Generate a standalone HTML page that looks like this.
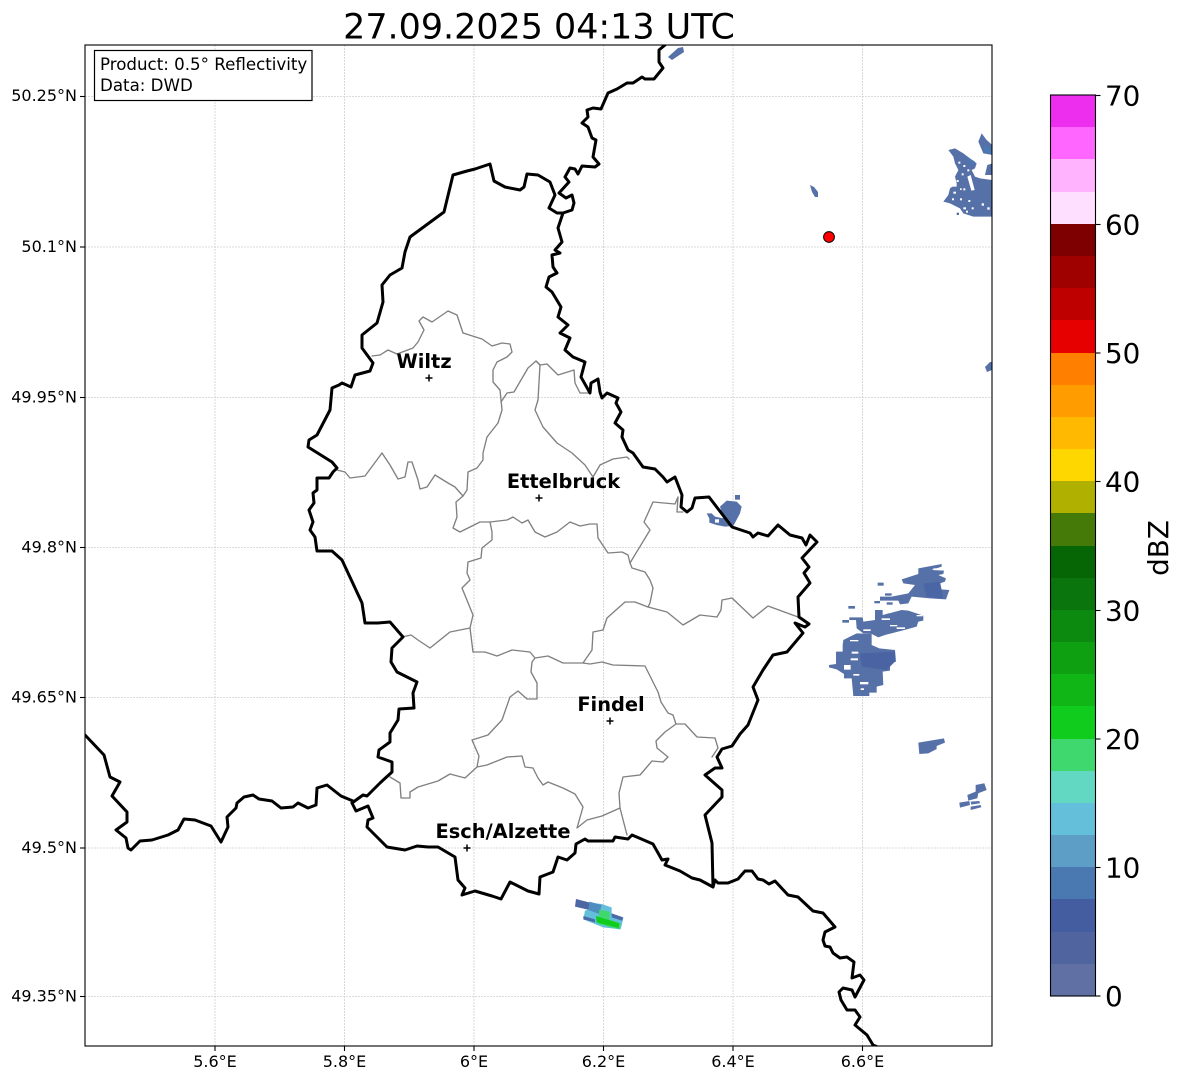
<!DOCTYPE html>
<html><head><meta charset="utf-8"><style>
html,body{margin:0;padding:0;background:#fff}
svg{display:block}
text{font-family:"DejaVu Sans","Liberation Sans",sans-serif;fill:#000}
.g line{stroke:#cfcfcf;stroke-width:.8;stroke-dasharray:2 1}
.t line{stroke:#000;stroke-width:1.1}
.b{fill:none;stroke:#000;stroke-width:3;stroke-linejoin:round;stroke-linecap:round}
.a{fill:none;stroke:#808080;stroke-width:1.35;stroke-linejoin:round;stroke-linecap:round}
.r{fill:#5670a8}
.w{fill:#fff}
.xl{font-size:16px;text-anchor:middle}
.yl{font-size:16px;text-anchor:end}
.cl{font-size:27.8px}
.cy{font-size:19.4px;font-weight:bold;text-anchor:middle}
</style></head><body>
<svg width="1184" height="1081" viewBox="0 0 1184 1081" xmlns="http://www.w3.org/2000/svg">
<defs><clipPath id="c"><rect x="85" y="45" width="907" height="1001"/></clipPath></defs>
<text x="539" y="38.500" font-size="34.900" text-anchor="middle">27.09.2025 04:13 UTC</text>
<g class="g">
<line x1="215" y1="45" x2="215" y2="1046"/><line x1="344.5" y1="45" x2="344.5" y2="1046"/><line x1="474" y1="45" x2="474" y2="1046"/><line x1="603.5" y1="45" x2="603.5" y2="1046"/><line x1="733" y1="45" x2="733" y2="1046"/><line x1="862.5" y1="45" x2="862.5" y2="1046"/>
<line x1="85" y1="96.5" x2="992" y2="96.5"/><line x1="85" y1="247" x2="992" y2="247"/><line x1="85" y1="397.5" x2="992" y2="397.5"/><line x1="85" y1="547.5" x2="992" y2="547.5"/><line x1="85" y1="697.5" x2="992" y2="697.5"/><line x1="85" y1="848" x2="992" y2="848"/><line x1="85" y1="996.5" x2="992" y2="996.5"/>
</g>
<g clip-path="url(#c)">
<!-- radar -->
<polygon class="r" points="668,57 678,48 683,47 684,52 672,60"/>
<polygon class="r" points="810,185 814,187 818,192 818,197 815,197 812,192"/>
<polygon class="r" points="985,367 990,362 992,362 992,370 987,372"/>
<g transform="translate(930,120) scale(.3333)">
<polygon class="r" points="55,90 75,85 100,100 120,115 140,130 135,145 125,150 135,170 150,175 187,180 187,290 130,290 100,280 90,265 60,250 40,245 55,225 60,205 80,190 75,170 85,150 75,130 70,110"/>
<polygon class="r" points="155,40 170,60 187,75 187,105 160,100 145,65"/>
<polygon class="r" points="172,135 187,130 187,165 165,165"/>
<polygon fill="#4a78b5" points="160,75 187,85 187,105 165,98"/>
<polygon fill="#4a78b5" points="110,110 135,125 125,140"/>
<polygon class="w" points="112,170 122,165 134,210 124,212"/>
<g class="w"><rect x="85" y="125" width="6" height="6"/><rect x="100" y="135" width="6" height="6"/><rect x="80" y="180" width="6" height="6"/><rect x="95" y="160" width="6" height="6"/><rect x="70" y="215" width="8" height="6"/><rect x="90" y="235" width="6" height="6"/><rect x="115" y="240" width="6" height="6"/><rect x="155" y="250" width="7" height="7"/><rect x="172" y="262" width="7" height="7"/><rect x="125" y="262" width="6" height="6"/><rect x="100" y="262" width="8" height="6"/><rect x="66" y="235" width="6" height="6"/><rect x="60" y="190" width="20" height="10"/><rect x="108" y="272" width="6" height="6"/><rect x="100" y="205" width="6" height="6"/><rect x="78" y="148" width="6" height="6"/><rect x="112" y="148" width="6" height="6"/><rect x="90" y="205" width="5" height="5"/></g>
<g class="r"><rect x="80" y="278" width="7" height="7"/><rect x="60" y="240" width="7" height="7"/></g>
</g>
<g transform="translate(820,550) scale(.3333)">
<polygon class="r" points="295,55 365,42 365,50 335,60 372,62 370,72 355,75 378,85 375,95 360,100 362,118 388,120 378,148 330,145 275,140 265,160 240,163 235,152 180,152 180,140 215,140 265,130 285,105 250,100 245,88 295,72"/>
<polygon fill="#4a66a5" points="310,100 360,95 370,145 320,140"/>
<g class="r"><rect x="173" y="98" width="18" height="9"/><rect x="163" y="153" width="17" height="7"/><rect x="200" y="157" width="18" height="7"/><rect x="195" y="130" width="20" height="7"/><rect x="85" y="168" width="20" height="8"/><rect x="67" y="210" width="20" height="8"/></g>
<polygon class="r" points="165,180 188,180 188,195 245,180 265,182 310,197 310,212 295,215 290,230 260,238 195,255 175,262 155,252 130,250 110,235 108,210 88,210 88,202 128,202 130,215 165,210"/>
<polygon class="r" points="70,270 110,250 155,252 155,285 178,295 225,300 228,335 210,340 210,362 188,365 190,405 170,410 170,428 148,428 148,438 100,438 95,385 72,385 72,372 50,358 27,352 27,345 48,342 48,305 68,305 68,285"/>
<polygon fill="#4a64a3" points="120,310 225,305 225,335 200,360 125,350"/>
<g class="w"><rect x="130" y="238" width="22" height="5"/><rect x="230" y="232" width="25" height="5"/><rect x="185" y="205" width="25" height="5"/><rect x="210" y="225" width="22" height="4"/><rect x="90" y="270" width="25" height="4"/><rect x="95" y="305" width="20" height="6"/><rect x="92" y="325" width="22" height="6"/><rect x="72" y="345" width="20" height="14"/><rect x="100" y="372" width="18" height="5"/><rect x="120" y="396" width="25" height="7"/><rect x="122" y="415" width="10" height="5"/><rect x="340" y="55" width="30" height="5"/><rect x="290" y="195" width="18" height="4"/></g>
<polygon class="r" points="295,578 372,565 375,578 350,588 350,597 325,610 298,612"/>
<polygon class="r" points="467,705 493,700 500,720 475,730 472,745 445,752 442,735 467,725"/>
<polygon class="r" points="418,758 448,753 450,765 420,773"/>
<polygon class="r" points="452,755 478,753 480,760 454,764"/>
<polygon class="r" points="452,770 482,765 484,772 452,780"/>
</g>
<g transform="translate(560,370) scale(.3333)">
<polygon class="r" points="480,410 500,392 530,395 545,410 540,430 520,468 495,470 470,465 448,458 448,445 440,430 455,430 465,440 490,445"/>
<rect class="r" x="525" y="375" width="15" height="14"/>
<rect class="w" x="465" y="448" width="12" height="10"/>
</g>
<g transform="translate(560,890) scale(.3333)">
<polygon fill="#4f66a5" points="48,27 90,38 88,60 45,50"/>
<polygon fill="#64c0da" points="90,38 125,42 155,52 155,70 190,85 182,118 130,112 70,88 75,62 88,58"/>
<polygon fill="#4f8cc0" points="88,35 125,45 118,72 85,60"/>
<polygon fill="#4a6aa8" points="70,78 105,88 105,97 70,88"/>
<polygon fill="#4a6aa8" points="155,70 190,82 186,92 155,82"/>
<polygon fill="#3fd86e" points="118,58 150,66 148,88 182,100 178,118 115,102"/>
<polygon fill="#10cc1c" points="108,78 178,100 176,114 110,97"/>
</g>
<!-- admin lines -->
<g class="a">
<path d="M372,356 380,355 388,350 397,354 413,348 418,342 424,330 419,321 423,317 432,322 448,311 457,315 463,333 482,339 492,346 502,343 510,344 512,352 507,357 497,362 493,370 493,382 500,390 502,410 498,423 487,437 483,453 483,460 477,468 468,472 467,490 463,496 456,502 457,517 453,528 460,532 480,522 490,522 507,520 513,517 522,523 528,520 535,532 545,537 557,532 570,522 580,526 590,524 597,524 598,538 608,553 622,552 628,555 630,563 650,530 644,522 653,502 675,504 678,497 677,512 683,512"/>
<path d="M337,470 345,472 350,478 365,476 382,453 390,465 398,479 405,477 408,462 412,462 418,480 420,489 427,487 435,475 448,483 455,487 463,496"/>
<path d="M490,522 492,532 492,540 482,548 481,558 468,562 467,573 470,580 462,588 473,615 470,628 450,632 430,648 418,640 411,635 402,637"/>
<path d="M470,628 473,652 485,652 497,656 512,650 530,652 535,658 548,656 563,663 583,663 590,664 602,662 613,665 645,666 658,692 661,702 668,713 673,715 676,724 685,724 697,737 715,738 718,748 712,757"/>
<path d="M676,724 665,732 656,741 657,748 668,757 663,762 652,761 640,775 623,777 619,793 620,808 627,835"/>
<path d="M620,808 602,816 587,820 577,828 583,807 575,794 563,788 548,782 543,785 538,778 533,768 525,767 522,756 507,757 487,765 477,767 465,778 450,774 438,781 418,787 410,792 410,798 401,798 400,783 390,777"/>
<path d="M477,767 479,756 472,740 488,735 502,720 510,697 518,691 527,699 537,699 537,683 531,672 532,662 535,658"/>
<path d="M501,402 507,393 514,392 528,368 536,361 540,365 538,400 535,410 543,427 557,443 572,453 585,465 593,477 600,465 613,459 627,457 629,459"/>
<path d="M536,361 540,365 547,364 553,370 558,375 574,370 575,383 580,393 588,393"/>
<path d="M630,563 632,568 645,572 650,580 653,588 650,603 648,607 635,602 625,602 607,618 603,630 593,632 592,650 583,663"/>
<path d="M648,607 667,612 683,625 700,615 717,617 721,610 722,600 732,598 753,618 768,606 798,617"/>
</g>
<!-- country border -->
<g class="b">
<path d="M85,735 104,755 110,777 120,782 112,796 127,812 127,822 116,830 126,838 128,848 131,850 140,841 152,840 168,835 178,830 184,819 195,820 211,826 221,842 228,827 227,817 236,808 237,803 244,797 253,795 259,799 272,801 281,808 293,807 298,803 308,808 316,805 317,788 327,785 341,796 353,801 352,803 363,795 367,796 380,783 392,772 392,762 378,757 379,750 390,742 390,733 398,720 399,709 414,708 413,693 417,682 397,672 391,662 392,648 403,637 390,622 378,623 365,623 362,603 342,560 332,551 317,551 315,537 310,530 313,522 309,510 314,503 313,493 317,490 317,478 329,478 333,472 337,468 332,462 308,447 309,440 317,435 330,410 332,388 339,385 342,383 351,387 355,375 370,371 373,363 362,348 362,335 377,323 383,302 382,285 390,275 402,268 405,252 410,237 444,212 453,175 467,171 475,169 490,164 494,181 505,187 520,190 524,187 527,174 538,175 550,182 555,195 549,208 557,213 563,213 572,210 574,203 572,195 566,198 559,193 569,182 565,177 570,168 575,169 578,174 582,166 595,167 599,164 593,157 596,140 592,138 588,127 582,123 588,117 587,110 593,108 601,109 608,93 617,89 627,83 633,83 642,77 645,79 654,79 663,68 659,62 659,50 665,45"/>
<path d="M563,213 558,228 562,242 555,250 560,253 552,255 553,267 557,273 549,277 546,287 552,292 561,307 558,317 568,325 560,333 570,338 565,350 573,357 585,362 581,377 590,393 591,383 598,379 600,392 602,398 607,393 618,398 616,403 621,412 615,423 623,430 622,437 628,450 633,453 643,467 655,469 663,477 667,482 675,477 682,495 681,507 687,512 692,508 695,498 709,497 732,527 750,533 753,537 758,533 768,536 778,525 790,535 802,538 806,545 810,535 817,542 802,558 809,567 804,573 810,583 798,597 799,617 809,624 805,627 795,623 803,633 787,652 773,655 763,670 753,687 758,700 748,725 740,734 732,746 722,749 717,757 722,768 715,768 705,775 722,790 722,797 705,815 712,843 713,887 700,880 692,878 680,871 665,865 668,859 662,860 653,844 632,835 628,839 615,837 613,841 588,841 585,839 576,844 575,853 567,860 558,857 553,872 540,877 539,894 528,891 510,882 501,899 492,896 475,891 462,895 465,888 458,880 455,857 438,847 428,847 417,846 405,850 387,847 378,838 367,827 368,820 373,818 368,806 356,811 352,803"/>
<path d="M713,887 715,880 718,883 728,883 738,879 745,871 752,871 758,879 763,880 769,884 775,881 788,895 798,897 813,911 823,913 835,927 825,932 823,940 825,946 830,947 833,953 840,958 847,957 854,962 852,978 860,975 864,980 855,997 852,990 843,988 839,992 841,1000 847,1010 855,1010 860,1017 855,1025 867,1035 873,1045 880,1048"/>
</g>
<!-- markers -->
<g stroke="#000" stroke-width="1.5" fill="none">
<path d="M425.500,378h7M429,374.500v7M535.500,498h7M539,494.500v7M606.500,721h7M610,717.500v7M463.500,848h7M467,844.500v7"/>
</g>
<circle cx="829" cy="237" r="5.400" fill="#f00" stroke="#000" stroke-width="1"/>
<text class="cy" x="424" y="368">Wiltz</text>
<text class="cy" x="563.500" y="488">Ettelbruck</text>
<text class="cy" x="611" y="711">Findel</text>
<text class="cy" x="503" y="838">Esch/Alzette</text>
</g>
<rect x="85" y="45" width="907" height="1001" fill="none" stroke="#000" stroke-width="1.1"/>
<rect x="94.500" y="50.500" width="217.500" height="50" fill="#fff" stroke="#000" stroke-width="1.2"/>
<text x="100" y="70" font-size="16.67">Product: 0.5° Reflectivity</text>
<text x="100" y="91" font-size="16.67">Data: DWD</text>
<!-- axis ticks -->
<g class="t">
<line x1="215" y1="1046" x2="215" y2="1051"/><line x1="344.5" y1="1046" x2="344.5" y2="1051"/><line x1="474" y1="1046" x2="474" y2="1051"/><line x1="603.5" y1="1046" x2="603.5" y2="1051"/><line x1="733" y1="1046" x2="733" y2="1051"/><line x1="862.5" y1="1046" x2="862.5" y2="1051"/>
<line x1="80" y1="96.500" x2="85" y2="96.500"/><line x1="80" y1="247" x2="85" y2="247"/><line x1="80" y1="397.500" x2="85" y2="397.500"/><line x1="80" y1="547.500" x2="85" y2="547.500"/><line x1="80" y1="697.500" x2="85" y2="697.500"/><line x1="80" y1="848" x2="85" y2="848"/><line x1="80" y1="996.500" x2="85" y2="996.500"/>
</g>
<text class="xl" x="215" y="1067">5.6°E</text><text class="xl" x="344.500" y="1067">5.8°E</text><text class="xl" x="474" y="1067">6°E</text><text class="xl" x="603.500" y="1067">6.2°E</text><text class="xl" x="733" y="1067">6.4°E</text><text class="xl" x="862.500" y="1067">6.6°E</text>
<text class="yl" x="77" y="101">50.25°N</text><text class="yl" x="77" y="252">50.1°N</text><text class="yl" x="77" y="402.500">49.95°N</text><text class="yl" x="77" y="552.500">49.8°N</text><text class="yl" x="77" y="702.500">49.65°N</text><text class="yl" x="77" y="853">49.5°N</text><text class="yl" x="77" y="1001.500">49.35°N</text>
<!-- colorbar -->
<g shape-rendering="crispEdges">
<rect x="1050.500" y="95" width="45" height="32.500" fill="#ee2eee"/>
<rect x="1050.500" y="127" width="45" height="32.500" fill="#ff66ff"/>
<rect x="1050.500" y="159" width="45" height="33.500" fill="#ffb3ff"/>
<rect x="1050.500" y="192" width="45" height="32.500" fill="#ffdfff"/>
<rect x="1050.500" y="224" width="45" height="32.500" fill="#7f0000"/>
<rect x="1050.500" y="256" width="45" height="32.500" fill="#9f0000"/>
<rect x="1050.500" y="288" width="45" height="32.500" fill="#bf0000"/>
<rect x="1050.500" y="320" width="45" height="33.500" fill="#e60000"/>
<rect x="1050.500" y="353" width="45" height="32.500" fill="#ff7f00"/>
<rect x="1050.500" y="385" width="45" height="32.500" fill="#ff9c00"/>
<rect x="1050.500" y="417" width="45" height="32.500" fill="#ffb900"/>
<rect x="1050.500" y="449" width="45" height="32.500" fill="#ffd700"/>
<rect x="1050.500" y="481" width="45" height="32.500" fill="#b0b000"/>
<rect x="1050.500" y="513" width="45" height="33.500" fill="#457a08"/>
<rect x="1050.500" y="546" width="45" height="32.500" fill="#066505"/>
<rect x="1050.500" y="578" width="45" height="32.500" fill="#0a750c"/>
<rect x="1050.500" y="610" width="45" height="32.500" fill="#0c8a10"/>
<rect x="1050.500" y="642" width="45" height="32.500" fill="#0fa012"/>
<rect x="1050.500" y="674" width="45" height="32.500" fill="#10b616"/>
<rect x="1050.500" y="706" width="45" height="33.500" fill="#10cc1c"/>
<rect x="1050.500" y="739" width="45" height="32.500" fill="#3fd86e"/>
<rect x="1050.500" y="771" width="45" height="32.500" fill="#62d8c3"/>
<rect x="1050.500" y="803" width="45" height="32.500" fill="#64c0da"/>
<rect x="1050.500" y="835" width="45" height="32.500" fill="#5c9ec5"/>
<rect x="1050.500" y="867" width="45" height="32.500" fill="#4a78b0"/>
<rect x="1050.500" y="899" width="45" height="33.500" fill="#435da0"/>
<rect x="1050.500" y="932" width="45" height="32.500" fill="#50659f"/>
<rect x="1050.500" y="964" width="45" height="32" fill="#6070a5"/>
</g>
<rect x="1050.500" y="95" width="45" height="901" fill="none" stroke="#000" stroke-width="1.1"/>
<g class="t">
<line x1="1095.500" y1="95.500" x2="1100.500" y2="95.500"/><line x1="1095.500" y1="224.500" x2="1100.500" y2="224.500"/><line x1="1095.500" y1="353" x2="1100.500" y2="353"/><line x1="1095.500" y1="481.500" x2="1100.500" y2="481.500"/><line x1="1095.500" y1="610.500" x2="1100.500" y2="610.500"/><line x1="1095.500" y1="739" x2="1100.500" y2="739"/><line x1="1095.500" y1="867.500" x2="1100.500" y2="867.500"/><line x1="1095.500" y1="996" x2="1100.500" y2="996"/>
</g>
<text class="cl" x="1105" y="105.500">70</text><text class="cl" x="1105" y="234.500">60</text><text class="cl" x="1105" y="363">50</text><text class="cl" x="1105" y="491.500">40</text><text class="cl" x="1105" y="620.500">30</text><text class="cl" x="1105" y="749">20</text><text class="cl" x="1105" y="877.500">10</text><text class="cl" x="1105" y="1006">0</text>
<text class="cl" transform="translate(1168,548) rotate(-90)" text-anchor="middle">dBZ</text>
</svg>
</body></html>
